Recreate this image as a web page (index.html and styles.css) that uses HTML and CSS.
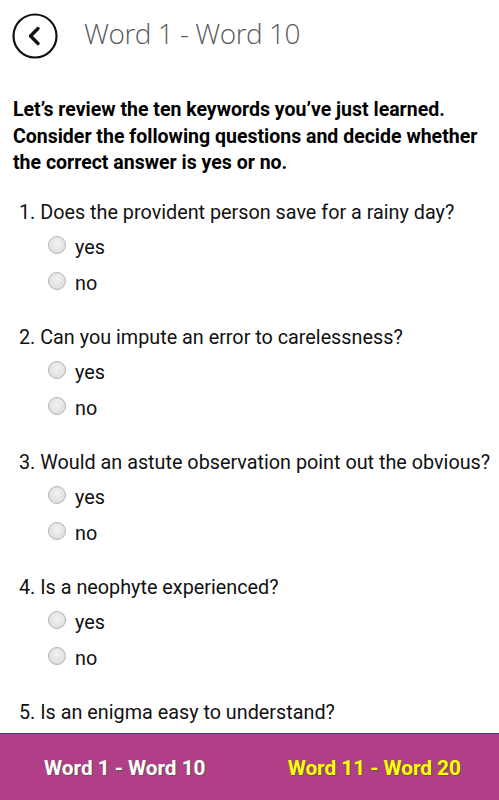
FILE: index.html
```html
<!DOCTYPE html>
<html lang="en">
<head>
<meta charset="utf-8">
<title>Word 1 - Word 10</title>
<link rel="stylesheet" href="styles.css">
</head>
<body>
<div class="page">
  <main class="content">
    <header class="header">
      <button class="back" aria-label="Back">
        <svg width="46" height="46" viewBox="0 0 46 46">
          <circle cx="23" cy="23" r="21.5" fill="none" stroke="#111" stroke-width="2.2"/>
          <path d="M26 15.5 L18.5 23 L26 30.5" fill="none" stroke="#111" stroke-width="3.4" stroke-linecap="round" stroke-linejoin="round"/>
        </svg>
      </button>
      <h1 class="title">Word 1 - Word 10</h1>
    </header>
    <p class="intro">Let’s review the ten keywords you’ve just learned. Consider the following questions and decide whether the correct answer is yes or no.</p>

    <section class="question">
      <p class="q-text">1. Does the provident person save for a rainy day?</p>
      <label class="option"><span class="radio"></span><span>yes</span></label>
      <label class="option"><span class="radio"></span><span>no</span></label>
    </section>
    <section class="question">
      <p class="q-text">2. Can you impute an error to carelessness?</p>
      <label class="option"><span class="radio"></span><span>yes</span></label>
      <label class="option"><span class="radio"></span><span>no</span></label>
    </section>
    <section class="question">
      <p class="q-text">3. Would an astute observation point out the obvious?</p>
      <label class="option"><span class="radio"></span><span>yes</span></label>
      <label class="option"><span class="radio"></span><span>no</span></label>
    </section>
    <section class="question">
      <p class="q-text">4. Is a neophyte experienced?</p>
      <label class="option"><span class="radio"></span><span>yes</span></label>
      <label class="option"><span class="radio"></span><span>no</span></label>
    </section>
    <section class="question">
      <p class="q-text">5. Is an enigma easy to understand?</p>
      <label class="option"><span class="radio"></span><span>yes</span></label>
      <label class="option"><span class="radio"></span><span>no</span></label>
    </section>
  </main>
  <footer class="tabs">
    <span class="tab">Word 1 - Word 10</span>
    <span class="tab tab-next">Word 11 - Word 20</span>
  </footer>
</div>
</body>
</html>
```

FILE: styles.css
```css
html, body {
  margin: 0;
  padding: 0;
  background: #fff;
}

.page {
  height: 800px;
  display: flex;
  flex-direction: column;
  font-family: Roboto, "Liberation Sans", sans-serif;
  color: #111;
}

.content {
  flex: 1;
  overflow: hidden;
}

.header {
  display: flex;
  align-items: center;
  padding: 13px 0 0 12px;
  height: 46px;
}

.back {
  width: 46px;
  height: 46px;
  padding: 0;
  border: 0;
  background: none;
  display: block;
}

.back svg {
  display: block;
}

.title {
  margin: 0 0 7px 26px;
  font-family: "Open Sans", sans-serif;
  font-weight: 300;
  font-size: 28px;
  color: #5a5a5a;
  line-height: 40px;
  letter-spacing: -0.5px;
}

.intro {
  margin: 38px 0 0 0;
  padding: 0 8px 0 13px;
  font-weight: 700;
  font-size: 19.5px;
  line-height: 26.5px;
  color: #000;
}

.question {
  margin-top: 24px;
}

.q-text {
  margin: 0 0 5px 19px;
  font-size: 19.8px;
  line-height: 24px;
  white-space: nowrap;
  color: #111;
}

.option {
  display: flex;
  align-items: center;
  height: 36px;
  font-size: 19.8px;
  line-height: 24px;
  color: #111;
}

.radio {
  width: 18px;
  height: 18px;
  box-sizing: border-box;
  border-radius: 50%;
  border: 1px solid #b4b4b4;
  background: radial-gradient(circle at 50% 40%, #f2f2f2 0%, #e0e0e0 70%, #d2d2d2 100%);
  margin: -5px 9px 0 48px;
  flex: none;
}

.tabs {
  height: 66px;
  flex: none;
  border-top: 1px solid #b8007e;
  background: #b13f87;
  display: grid;
  grid-template-columns: 1fr 1fr;
  align-items: center;
}

.tab {
  text-align: center;
  font-weight: 700;
  font-size: 20.7px;
  line-height: 26px;
  color: #fff;
  text-shadow: 1px 1px 1px #555;
  padding-top: 2px;
}

.tab-next {
  color: #ffff00;
}
```
